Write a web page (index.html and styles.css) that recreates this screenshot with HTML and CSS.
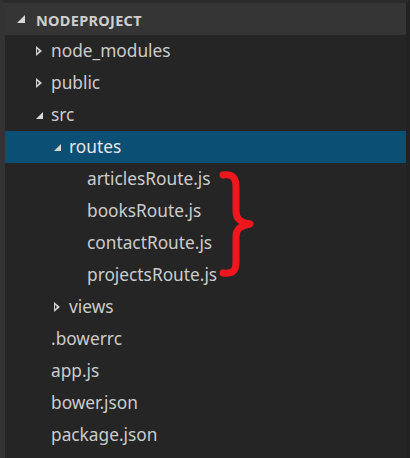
FILE: index.html
```html
<!DOCTYPE html>
<html>
<head>
<meta charset="utf-8">
<link rel="stylesheet" href="styles.css">
</head>
<body>
<div class="frame">
  <div class="explorer">
    <div class="header">
      <span class="arrow open"></span>
      <span class="title">NODEPROJECT</span>
    </div>
    <div class="row l1"><span class="arrow closed"></span><span class="name">node_modules</span></div>
    <div class="row l1"><span class="arrow closed"></span><span class="name">public</span></div>
    <div class="row l1"><span class="arrow open"></span><span class="name">src</span></div>
    <div class="row l2 selected"><span class="arrow open"></span><span class="name">routes</span></div>
    <div class="group">
      <div class="files">
        <div class="row l3"><span class="arrow none"></span><span class="name">articlesRoute.js</span></div>
        <div class="row l3"><span class="arrow none"></span><span class="name">booksRoute.js</span></div>
        <div class="row l3"><span class="arrow none"></span><span class="name">contactRoute.js</span></div>
        <div class="row l3"><span class="arrow none"></span><span class="name">projectsRoute.js</span></div>
      </div>
      <svg class="brace" width="38" height="112" viewBox="0 0 38 112">
        <path d="M4 6 C 14 5, 17 9, 17 18 L 17 42 C 17 50, 21 53, 31 55 C 21 57, 17 60, 17 68 L 17 93 C 17 102, 14 105, 4 104" fill="none" stroke="#f0161e" stroke-width="7" stroke-linecap="round" stroke-linejoin="round"/>
      </svg>
    </div>
    <div class="row l2"><span class="arrow closed"></span><span class="name">views</span></div>
    <div class="row l1"><span class="arrow none"></span><span class="name">.bowerrc</span></div>
    <div class="row l1"><span class="arrow none"></span><span class="name">app.js</span></div>
    <div class="row l1"><span class="arrow none"></span><span class="name">bower.json</span></div>
    <div class="row l1"><span class="arrow none"></span><span class="name">package.json</span></div>
  </div>
</div>
</body>
</html>
```

FILE: styles.css
```css
html, body {
  margin: 0;
  padding: 0;
  background: #252526;
}
.frame {
  width: 410px;
  height: 458px;
  box-sizing: border-box;
  border-left: 5px solid #333335;
  border-top: 3px solid #2b2b2c;
  border-right: 4px solid #222223;
  background: #252526;
  overflow: hidden;
  font-family: "Noto Sans", "Open Sans", sans-serif;
}
.explorer {
  display: flex;
  flex-direction: column;
}
.header {
  height: 32px;
  background: #353536;
  display: flex;
  align-items: center;
  padding-left: 12px;
  gap: 11px;
}
.title {
  color: #cfcfcf;
  font-weight: 700;
  font-size: 14.5px;
  letter-spacing: 0.3px;
  padding-top: 1px;
}
.row {
  height: 32px;
  display: flex;
  align-items: center;
  color: #cccccc;
  font-size: 17.3px;
}
.row .name {
  padding-bottom: 2px;
}
.row.l1 { padding-left: 28px; }
.row.l2 { padding-left: 46px; }
.row.l3 { padding-left: 64px; }
.row.selected { background: #0b4f75; color: #e6e6e6; }
.arrow {
  width: 18px;
  height: 12px;
  flex: none;
  position: relative;
}
.arrow.open::before {
  content: "";
  position: absolute;
  left: 3px;
  top: 3px;
  width: 0;
  height: 0;
  border-left: 7px solid transparent;
  border-bottom: 7px solid #d8d8d8;
}
.header .arrow {
  width: 8px;
}
.header .arrow.open::before {
  left: 0;
  top: 2px;
  border-left-width: 8px;
  border-bottom-width: 8px;
}
.arrow.closed::before {
  content: "";
  position: absolute;
  left: 3px;
  top: 1px;
  width: 0;
  height: 0;
  border-top: 5px solid transparent;
  border-bottom: 5px solid transparent;
  border-left: 6px solid #d0d0d0;
}
.arrow.closed::after {
  content: "";
  position: absolute;
  left: 4px;
  top: 4px;
  width: 0;
  height: 0;
  border-top: 2px solid transparent;
  border-bottom: 2px solid transparent;
  border-left: 2px solid #252526;
}
.group {
  display: flex;
  align-items: flex-start;
}
.files {
  width: 214px;
  display: flex;
  flex-direction: column;
}
.brace {
  margin-top: 6px;
  flex: none;
}
```
